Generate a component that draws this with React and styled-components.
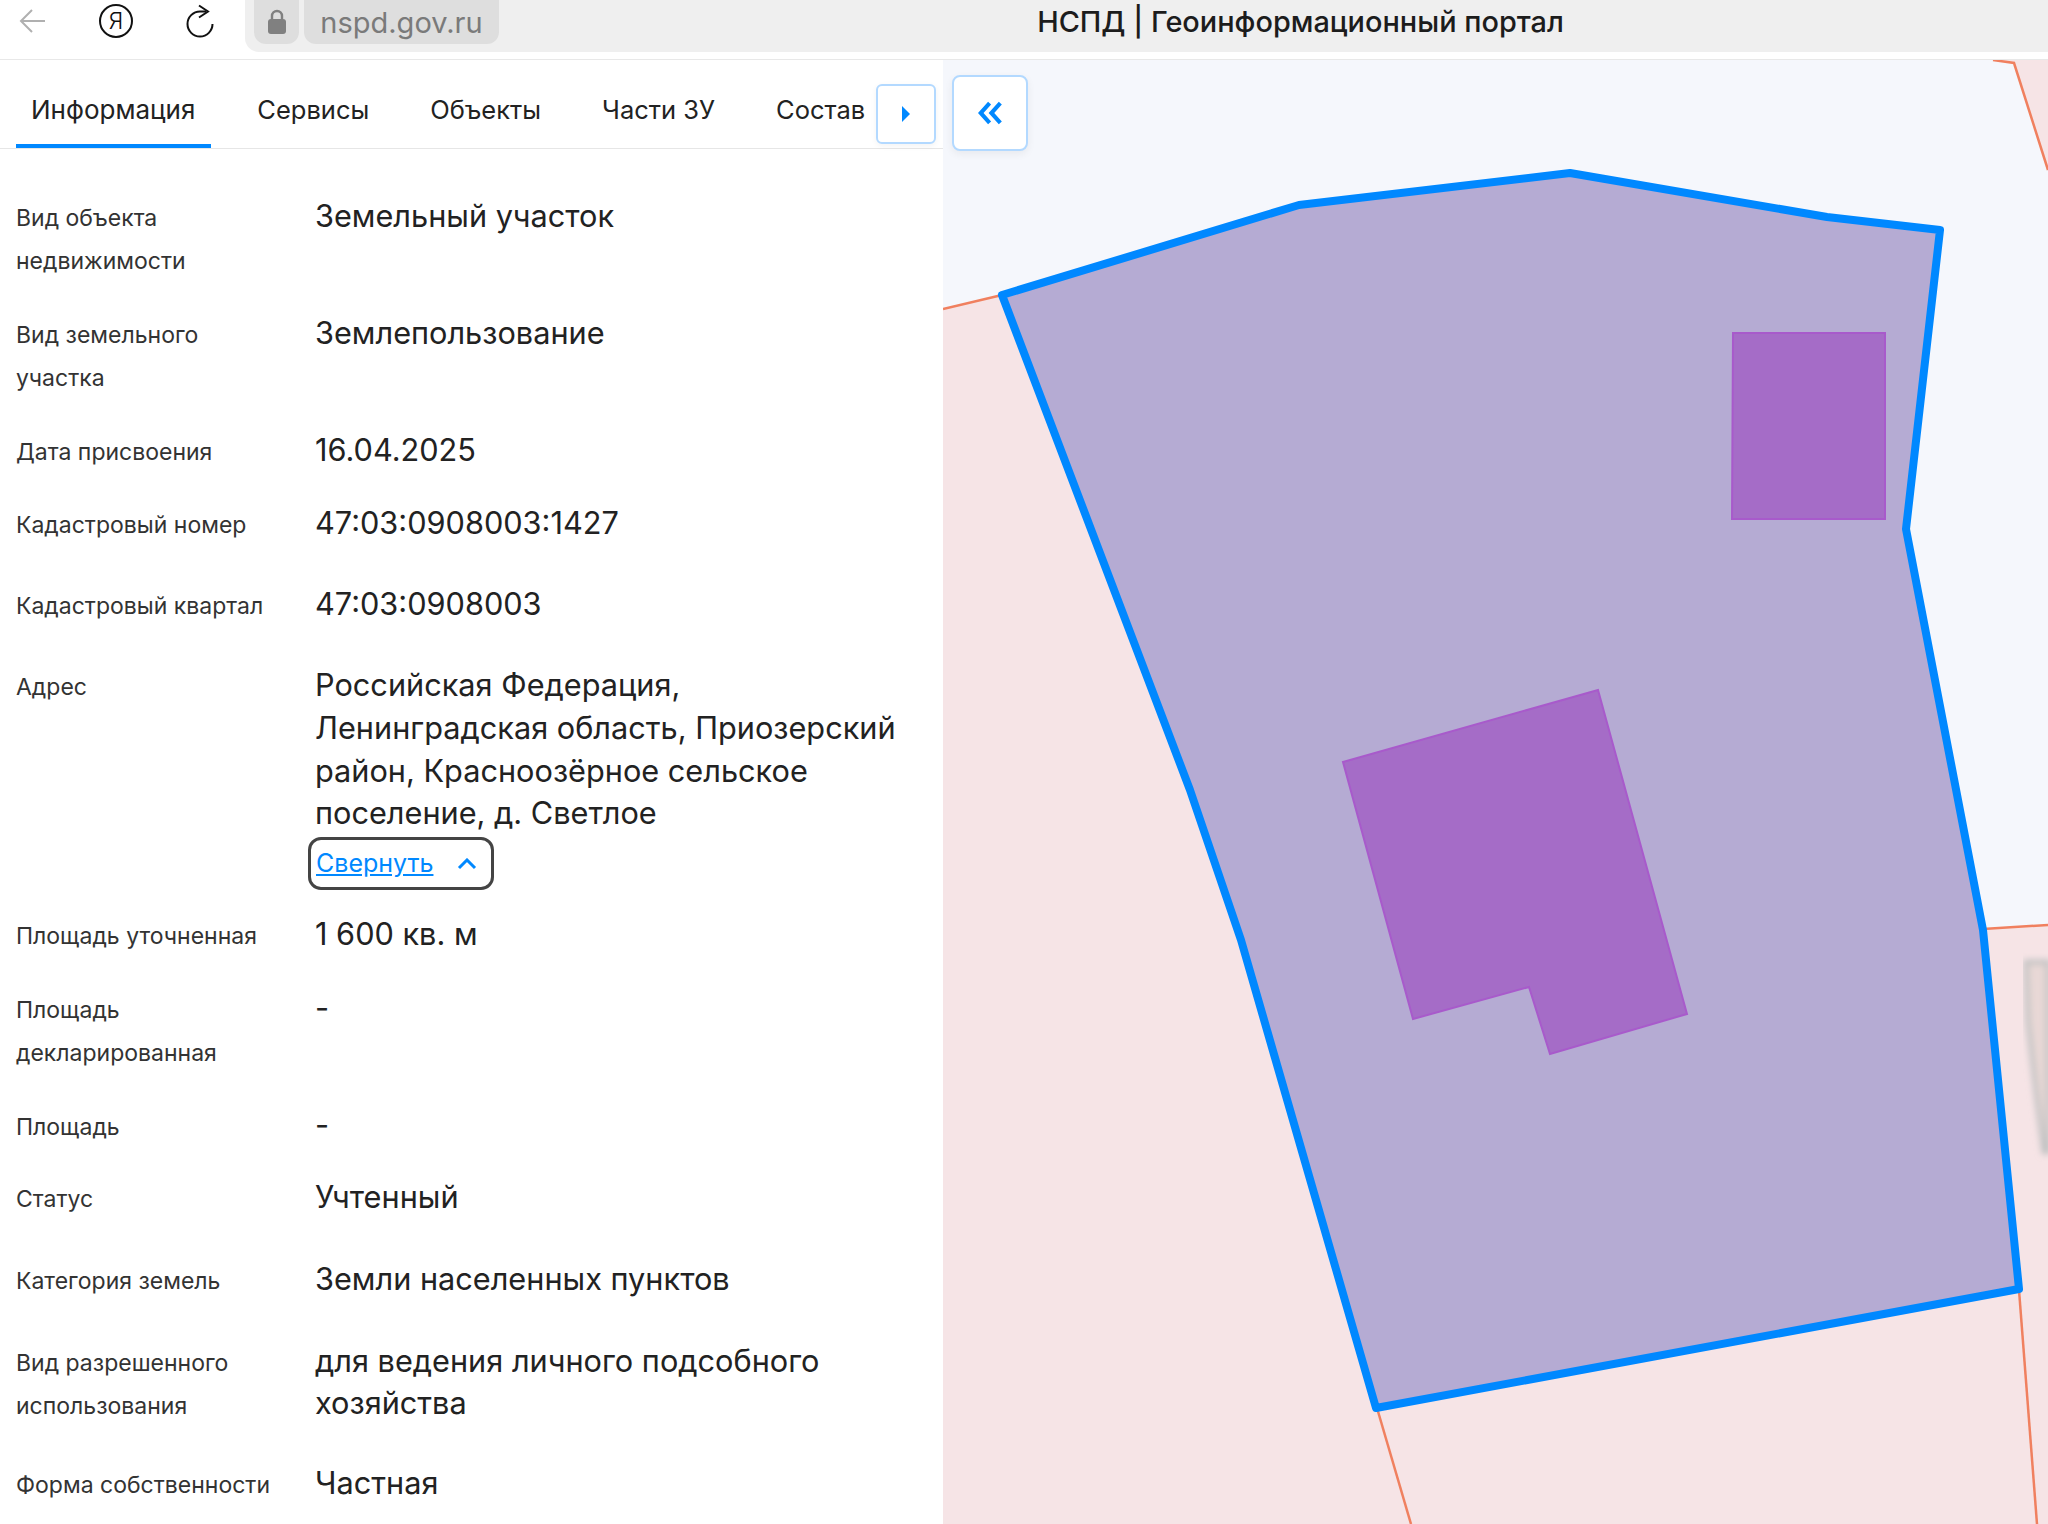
import React from "react";
import styled, { createGlobalStyle } from "styled-components";

const fields = [
  { label: "Вид объекта недвижимости", value: "Земельный участок", after: 30 },
  { label: "Вид земельного участка", value: "Землепользование", after: 30 },
  { label: "Дата присвоения", value: "16.04.2025", after: 29 },
  { label: "Кадастровый номер", value: "47:03:0908003:1427", after: 37 },
  { label: "Кадастровый квартал", value: "47:03:0908003", after: 37.4 },
  {
    label: "Адрес",
    value:
      "Российская Федерация, Ленинградская область, Приозерский район, Красноозёрное сельское поселение, д. Светлое",
    collapsible: true,
    after: 31.3,
  },
  { label: "Площадь уточненная", value: "1 600 кв. м", after: 30 },
  { label: "Площадь декларированная", value: "-", after: 29.5 },
  { label: "Площадь", value: "-", after: 28 },
  { label: "Статус", value: "Учтенный", after: 38 },
  { label: "Категория земель", value: "Земли населенных пунктов", after: 38 },
  {
    label: "Вид разрешенного использования",
    value: "для ведения личного подсобного хозяйства",
    after: 35.6,
  },
  { label: "Форма собственности", value: "Частная", after: 0 },
];

const tabs = ["Информация", "Сервисы", "Объекты", "Части ЗУ", "Состав"];

export default function App() {
  return (
    <>
      <GlobalStyle />
      <Page>
        <BrowserBar>
          <BarIcons>
            <BackIcon viewBox="0 0 30 30">
              <path d="M27 15H3M14 4L3 15l11 11" />
            </BackIcon>
            <YandexBadge>Я</YandexBadge>
            <ReloadIcon viewBox="185 0 30 40">
              <path d="M206 9.5h-6A12.5 12.5 0 1 0 212.5 22" />
              <path d="M199 3.5l9 6-9 6" />
            </ReloadIcon>
          </BarIcons>
          <AddressPill>
            <LockBox>
              <svg width="20" height="26" viewBox="0 0 20 26">
                <path
                  d="M5 11V7a5 5 0 0 1 10 0v4"
                  fill="none"
                  stroke="#808080"
                  strokeWidth="2.4"
                />
                <rect x="1" y="10" width="18" height="15" rx="3" fill="#808080" />
              </svg>
            </LockBox>
            <UrlBox>nspd.gov.ru</UrlBox>
            <PageTitle>НСПД | Геоинформационный портал</PageTitle>
          </AddressPill>
        </BrowserBar>
        <Content>
          <SidePanel>
            <TabBar>
              {tabs.map((tab, i) => (
                <Tab key={tab} $active={i === 0}>
                  {tab}
                </Tab>
              ))}
              <ScrollButton>
                <svg width="10" height="16" viewBox="0 0 10 16">
                  <path d="M1 0l8 8-8 8z" fill="#0088ff" />
                </svg>
              </ScrollButton>
            </TabBar>
            <FieldList>
              {fields.map((f) => (
                <FieldRow key={f.label} $after={f.after}>
                  <FieldLabel>{f.label}</FieldLabel>
                  <FieldValue>
                    {f.value}
                    {f.collapsible && (
                      <CollapseLink>
                        <span>Свернуть</span>
                        <svg width="20" height="12" viewBox="0 0 20 12">
                          <path
                            d="M2 10l8-8 8 8"
                            fill="none"
                            stroke="#0088ff"
                            strokeWidth="3"
                          />
                        </svg>
                      </CollapseLink>
                    )}
                  </FieldValue>
                </FieldRow>
              ))}
            </FieldList>
          </SidePanel>
          <MapPanel>
            <CollapseButton>
              <svg width="25" height="24" viewBox="0 0 28 26">
                <path
                  d="M13 2L3 13l10 11M25 2L15 13l10 11"
                  fill="none"
                  stroke="#0088ff"
                  strokeWidth="4.6"
                />
              </svg>
            </CollapseButton>
            <MapCanvas viewBox="943 60 1105 1464">
              <defs>
                <filter id="blurred">
                  <feGaussianBlur stdDeviation="3" />
                </filter>
              </defs>
              <g fill="#f6e4e6">
                <polygon points="943,309 1002,295 1190,790 1241,940 1377,1408 1411,1524 943,1524" />
                <polygon points="1377,1408 2019,1290 2037,1524 1411,1524" />
                <polygon points="1983,929 2048,925 2048,1524 2037,1524 2019,1290" />
                <polygon points="1993,60 2014,63 2048,170 2048,60" />
              </g>
              <path
                d="M2026 962h22v190h-4l-8-60-8-70z"
                fill="#e8d8d6"
                stroke="#b5bcbc"
                strokeOpacity="0.8"
                strokeWidth="5"
                filter="url(#blurred)"
              />
              <g fill="none" stroke="#f0805f" strokeWidth="2.5">
                <path d="M943 309L1002 295" />
                <path d="M1377 1408L1411 1524" />
                <path d="M1983 929L2048 925" />
                <path d="M2019 1290L2037 1524" />
                <path d="M1993 60L2014 63L2048 170" />
              </g>
              <polygon
                points="1002,295 1299,205 1570,173 1827,217 1940,230 1906,529 1983,930 2019,1289 1376,1408 1241,940 1190,790"
                fill="#b5abd3"
                stroke="#0088ff"
                strokeWidth="8"
                strokeLinejoin="round"
              />
              <g fill="#a56cc7" stroke="#a85acb" strokeWidth="2">
                <polygon points="1733,333 1885,333 1885,519 1732,519" />
                <polygon points="1343,762 1598,690 1687,1014 1550,1054 1529,987 1413,1019" />
              </g>
            </MapCanvas>
          </MapPanel>
        </Content>
      </Page>
    </>
  );
}

const GlobalStyle = createGlobalStyle`
  body {
    margin: 0;
    background: #fff;
    font-family: Inter, "Liberation Sans", sans-serif;
  }
`;

const Page = styled.div`
  width: 2048px;
  height: 1524px;
  overflow: hidden;
  display: flex;
  flex-direction: column;
`;

const BrowserBar = styled.div`
  height: 59px;
  flex: none;
  display: flex;
  align-items: flex-start;
  border-bottom: 1px solid #e8e8e8;
  background: #fff;
`;

const BarIcons = styled.div`
  width: 245px;
  flex: none;
  display: flex;
  align-items: center;
  height: 42px;
  padding-left: 18px;
  box-sizing: border-box;
`;

const BackIcon = styled.svg`
  width: 30px;
  height: 30px;
  margin-right: 51px;
  fill: none;
  stroke: #b0b0b0;
  stroke-width: 2;
`;

const YandexBadge = styled.div`
  width: 34px;
  height: 34px;
  box-sizing: border-box;
  border: 2px solid #111;
  border-radius: 50%;
  display: flex;
  align-items: center;
  justify-content: center;
  font-size: 23px;
  font-weight: 300;
  color: #111;
  margin-right: 52px;
`;

const ReloadIcon = styled.svg`
  width: 30px;
  height: 40px;
  margin-top: 2px;
  fill: none;
  stroke: #111;
  stroke-width: 2;
`;

const AddressPill = styled.div`
  flex: 1;
  height: 52px;
  display: flex;
  align-items: flex-start;
  gap: 5px;
  padding-left: 9px;
  background: #efefef;
  border-bottom-left-radius: 14px;
`;

const LockBox = styled.div`
  width: 45px;
  height: 44px;
  display: flex;
  align-items: center;
  justify-content: center;
  background: #dedede;
  border-radius: 0 0 12px 12px;
`;

const UrlBox = styled.div`
  width: 195px;
  height: 44px;
  display: flex;
  align-items: center;
  justify-content: center;
  background: #dedede;
  border-radius: 0 0 12px 12px;
  color: #7a7a7a;
  font-size: 29px;
`;

const PageTitle = styled.div`
  flex: 1;
  height: 44px;
  line-height: 44px;
  padding-left: 49px;
  text-align: center;
  font-size: 28.9px;
  color: #1c1c1c;
  font-weight: 500;
`;

const Content = styled.div`
  flex: 1;
  display: flex;
  min-height: 0;
`;

const SidePanel = styled.div`
  width: 943px;
  flex: none;
  background: #fff;
`;

const TabBar = styled.div`
  height: 89px;
  box-sizing: border-box;
  padding-left: 16px;
  display: flex;
  align-items: stretch;
  gap: 31px;
  border-bottom: 1px solid #e6e6e6;
`;

const Tab = styled.div`
  padding: 14px ${(p) => (p.$active ? "16px" : "15px")} 0 15px;
  display: flex;
  align-items: center;
  white-space: nowrap;
  font-size: ${(p) => (p.$active ? "26px" : "25.5px")};
  color: #222;
  border-bottom: 4px solid ${(p) => (p.$active ? "#0088ff" : "transparent")};
`;

const ScrollButton = styled.div`
  width: 60px;
  height: 60px;
  box-sizing: border-box;
  margin: 24px 0 0 -35px;
  background: #fff;
  border: 2px solid #b3d9ff;
  border-radius: 6px;
  box-shadow: 0 2px 6px rgba(0, 0, 0, 0.05);
  display: flex;
  align-items: center;
  justify-content: center;
`;

const FieldList = styled.div`
  padding: 46px 0 0 16px;
  display: flex;
  flex-direction: column;
`;

const FieldRow = styled.div`
  display: grid;
  grid-template-columns: 299px 600px;
  margin-bottom: ${(p) => p.$after}px;
`;

const FieldLabel = styled.div`
  font-size: 23px;
  line-height: 43px;
  padding: 2px 28px 0 0;
  margin-bottom: -1px;
  color: #333;
`;

const FieldValue = styled.div`
  font-size: 30.7px;
  line-height: 42.6px;
  color: #222;
`;

const CollapseLink = styled.div`
  width: 186px;
  height: 53px;
  box-sizing: border-box;
  margin: 2.3px 0 -8px -7px;
  padding: 0 14px 0 5px;
  border: 3px solid #444;
  border-radius: 13px;
  display: flex;
  align-items: center;
  justify-content: space-between;
  font-size: 25px;
  color: #0088ff;
  span {
    text-decoration: underline;
  }
`;

const MapPanel = styled.div`
  flex: 1;
  position: relative;
  background: #f5f7fc;
`;

const MapCanvas = styled.svg`
  display: block;
  width: 100%;
  height: 100%;
`;

const CollapseButton = styled.div`
  position: absolute;
  left: 9px;
  top: 15px;
  width: 76px;
  height: 76px;
  box-sizing: border-box;
  background: #fff;
  border: 2px solid #b3d9ff;
  border-radius: 8px;
  box-shadow: 0 3px 8px rgba(0, 0, 0, 0.06);
  display: flex;
  align-items: center;
  justify-content: center;
`;
